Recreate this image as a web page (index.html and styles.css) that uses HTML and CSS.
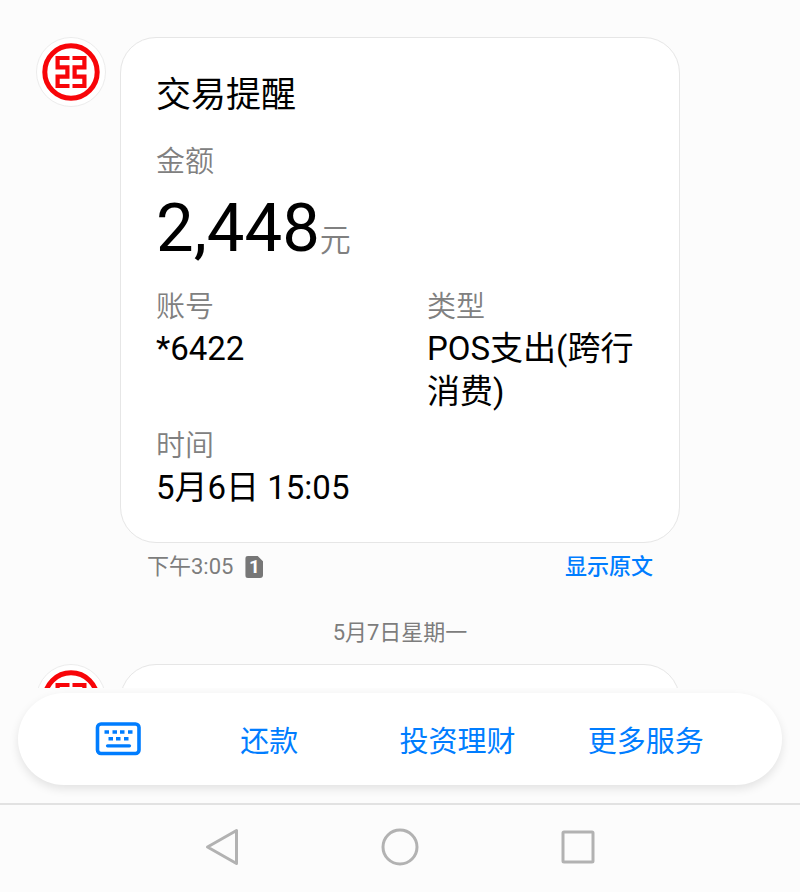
FILE: index.html
```html
<!DOCTYPE html>
<html lang="zh-CN">
<head>
<meta charset="utf-8">
<meta name="viewport" content="width=device-width, initial-scale=1">
<title>交易提醒</title>
<link rel="stylesheet" href="styles.css">
</head>
<body>
<svg class="defs" aria-hidden="true">
  <symbol id="bank" viewBox="0 0 70 70">
    <circle cx="35" cy="35" r="34.5" fill="#fff" stroke="#ececec"/>
    <circle cx="35" cy="35" r="26.2" fill="none" stroke="#f80509" stroke-width="5"/>
    <path fill="none" stroke="#f80509" stroke-width="4.200" d="M33.500 21H21.600V30.300H31.400V39.700H21.600V49H33.500M36.500 21H48.400V30.300H38.600V39.700H48.400V49H36.500"/>
  </symbol>
</svg>
<main class="chat">
  <article class="message">
    <svg class="avatar" role="img" aria-label="银行"><use href="#bank"/></svg>
    <div class="body">
      <section class="card">
        <h1>交易提醒</h1>
        <dl>
          <div class="field wide">
            <dt>金额</dt>
            <dd class="amount">2,448<span>元</span></dd>
          </div>
          <div class="field"><dt>账号</dt><dd>*6422</dd></div>
          <div class="field"><dt>类型</dt><dd>POS支出(跨行消费)</dd></div>
          <div class="field wide"><dt>时间</dt><dd>5月6日 15:05</dd></div>
        </dl>
      </section>
      <div class="meta">
        <time>下午3:05</time>
        <span class="sim">1</span>
        <a href="#original">显示原文</a>
      </div>
    </div>
  </article>
  <p class="date">5月7日星期一</p>
  <article class="message">
    <svg class="avatar" role="img" aria-label="银行"><use href="#bank"/></svg>
    <div class="body"><section class="card next"></section></div>
  </article>
</main>
<div class="dock">
  <div class="menu">
    <button type="button" aria-label="键盘">
      <svg width="46" height="34" viewBox="0 0 46 34" fill="none" stroke="#007dff">
        <rect x="2.500" y="2" width="41.500" height="29.500" rx="3.500" stroke-width="3.600"/>
        <path stroke-width="3.600" d="M9.500 10h4.500M17.500 10h4.500M25 10h4.500M33 10h4.500M13.500 16.800h4.500M21 16.800h4.500M29 16.800h4.500"/>
        <path stroke-width="3.200" stroke-linecap="round" d="M12.500 23.800h22"/>
      </svg>
    </button>
    <button type="button">还款</button>
    <button type="button">投资理财</button>
    <button type="button">更多服务</button>
  </div>
</div>
<nav class="system">
  <button type="button" aria-label="返回"><svg width="40" height="40" viewBox="0 0 40 40"><path d="M34.500 3.500V36.500L5.500 20Z"/></svg></button>
  <button type="button" aria-label="主页"><svg width="40" height="40" viewBox="0 0 40 40"><circle cx="20" cy="20" r="17"/></svg></button>
  <button type="button" aria-label="最近任务"><svg width="40" height="40" viewBox="0 0 40 40"><rect x="5" y="5" width="30" height="30" rx="1"/></svg></button>
</nav>
</body>
</html>
```
FILE: styles.css
```css
* { box-sizing: border-box; }

body {
  display: flex;
  flex-direction: column;
  height: 100vh;
  margin: 0;
  overflow: hidden;
  background: #fcfcfc;
  color: #000;
  font-family: Roboto, "Noto Sans CJK SC", sans-serif;
}

h1, dl, dd, p { margin: 0; font-weight: 400; }

button {
  display: flex;
  align-items: center;
  justify-content: center;
  padding: 0;
  border: 0;
  background: none;
  font: inherit;
  color: inherit;
}

.defs { position: absolute; width: 0; height: 0; }

.chat {
  flex: 1;
  min-height: 0;
  overflow: hidden;
  padding: 37px 36px 0;
}

.message { display: flex; gap: 14px; }
.avatar { flex: none; width: 70px; height: 70px; }
.body { flex: 1; margin-right: 84px; }

.card {
  padding: 36px 35px 33px;
  border: 1px solid #e6e6e6;
  border-radius: 36px;
  background: #fff;
}
.card.next { min-height: 200px; }

h1 { font-size: 35px; line-height: 44px; }

dl {
  display: grid;
  grid-template-columns: 271px 1fr;
  row-gap: 14px;
  margin-top: 25px;
}
.wide { grid-column: 1 / -1; }
dt { color: #808080; font-size: 29px; font-weight: 350; line-height: 39px; }
dd { font-size: 33px; line-height: 43px; }
dd.amount { font-size: 67px; line-height: 92px; }
.amount span { color: #808080; font-size: 31px; font-weight: 350; line-height: 31px; }

.meta {
  display: flex;
  align-items: center;
  padding: 7px 27px 0;
  color: #7d7d7d;
  font-size: 22px;
  line-height: 34px;
}
.sim {
  width: 18px;
  height: 22px;
  margin-left: 12px;
  border-radius: 3px;
  background: #777;
  clip-path: polygon(0 0, 68% 0, 100% 26%, 100% 100%, 0 100%);
  color: #fff;
  font-size: 19px;
  font-weight: 700;
  line-height: 22px;
  text-align: center;
}
.meta a {
  margin-left: auto;
  color: #007dff;
  font-weight: 500;
  text-decoration: none;
}

.date {
  margin: 32px 0 14px;
  color: #7d7d7d;
  font-size: 22px;
  line-height: 34px;
  text-align: center;
}

.dock { padding: 5px 18px 18px; }
.menu {
  display: grid;
  grid-template-columns: 115px 1fr 1fr 1fr;
  height: 92px;
  padding: 0 42px;
  border-radius: 46px;
  background: #fff;
  box-shadow: 0 4px 10px rgba(0, 0, 0, 0.1);
  color: #007dff;
  font-size: 29px;
}

.system {
  display: grid;
  grid-template-columns: repeat(3, 178px);
  justify-content: center;
  height: 89px;
  padding-bottom: 3px;
  border-top: 2px solid #e2e2e2;
}
.system svg {
  fill: none;
  stroke: #b2b2b2;
  stroke-width: 3;
  stroke-linejoin: round;
}
```
